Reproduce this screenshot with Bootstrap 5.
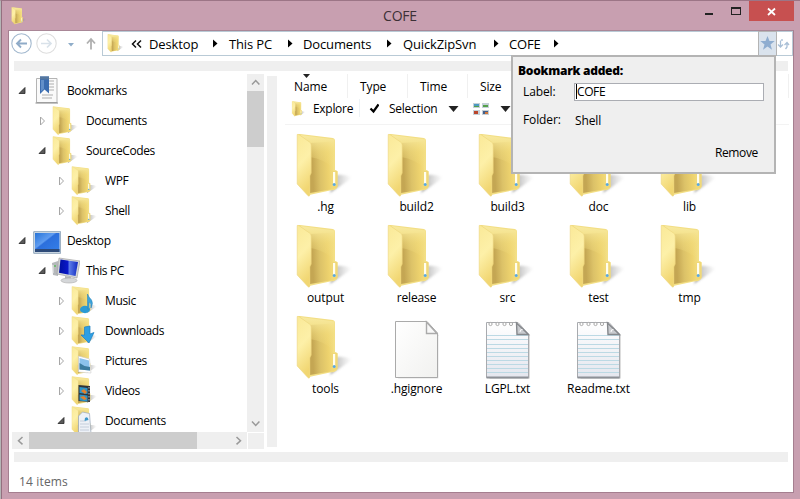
<!DOCTYPE html>
<html lang="en">
<head>
<meta charset="utf-8">
<title>COFE</title>
<link href="https://cdn.jsdelivr.net/npm/bootstrap@5.3.0/dist/css/bootstrap.min.css" rel="stylesheet">
<style>
body{width:800px;height:499px;overflow:hidden;background:#c89fb0;font:12px/16px "Open Sans","Noto Sans",sans-serif;color:#000;letter-spacing:-.12px}
svg{display:block;flex:none}
.window{width:800px;height:499px;border-top:1px solid #9c7586;border-left:1px solid #b5b5b5;box-shadow:inset 1px 0 #94707f}
.titlebar{height:29px;padding-right:6px}
.app-icon{margin-top:5px}
.caption-text{width:600px;margin-left:73px;font-size:14px;line-height:30px;color:#3c3036;letter-spacing:-.2px}
.close-box{width:45px;height:20px;background:#c75050}
.client{width:786px;height:463px;margin-left:7px;border:1px solid #a57f90;border-top-color:#a98797;background:#fff}
.addressbar{height:25px}
.crumbs{width:691px;height:25px;border:1px solid #b9cad6;font-size:13px;letter-spacing:-.13px}
.crumb{white-space:nowrap}
.back-more{margin:0 7px 0 6px}
.star-btn{width:17px;height:23px;background:#dae3ed;outline:1px solid #b4b4b4}
.strip{height:10px;background:#efefef;margin:5px 5px 0}
.strip-low{margin-top:3px}
.main-area{height:375px;margin-top:3px}
.sidebar{width:252px;margin-left:3px}
.tree{width:235px;height:358px;overflow:hidden;padding-top:2px;letter-spacing:-.38px}
.tree-row{height:30px}
.lv1{padding-left:19px}.lv2{padding-left:38px}
.tw{width:9px;margin-left:6px}
.lv1 .tw,.lv2 .tw{margin-left:7px}
.ic{width:28px;margin:0 6px 0 6px}
.lv1 .ic,.lv2 .ic{margin-left:5px}
.vbar{width:17px;height:358px;background:#efefef}
.vthumb{height:56px;background:#cdcdcd}
.hbar{width:235px;height:17px;background:#efefef}
.hthumb{width:168px;height:17px;background:#cdcdcd}
.corner{width:16px;height:16px;background:#efefef}
.splitter{width:10px;height:371px;margin:2px 0 0 3px;background:#efefef}
.pane{width:511px;margin-left:4px}
.heads{height:24px}
.heads>div{height:24px;border-right:1px solid #f0f0f0;padding:5px 0 0 12px}
.heads>div:first-child{padding-left:13px}
.tools{height:27px;border-bottom:1px solid #f3f3f3;margin:0 3px 0 4px}
.tools>*{position:relative;top:-2px}
.files{display:grid;grid-template-columns:repeat(5,91px);grid-auto-rows:91px;padding-top:7px;margin-left:-1px}
.file{padding-top:1px}
.file .pic{width:60px;height:66px;margin-left:16px}
.fname{text-align:center;line-height:16px}
.statusbar{padding-left:10px;line-height:17px;color:#666;margin-top:11px;letter-spacing:.15px}
.popup{left:511px;top:55px;width:265px;height:119px;background:#efefef;border:2px solid #b4b4b4;z-index:5}
.popup-title{font-weight:800;padding:6px 0 0 5px;letter-spacing:-.27px}
.popup-grid{display:grid;grid-template-columns:51px 190px;padding:4px 0 0 10px;row-gap:9px}
.popup-label{padding-top:1px}
.folder-label{padding-top:2px}
.folder-value{padding:4px 0 0 1px;line-height:14px}
.remove-link{padding:17px 16px 0 0;letter-spacing:-.35px}
.field{height:18px;line-height:16px;border:1px solid #abadb3;background:#fff;padding-left:1px}
.field span{border-left:1px solid #000;display:inline-block;line-height:15px;letter-spacing:-.4px}
.sort-mark{left:302px;top:73px}
</style>
<script src="https://cdn.jsdelivr.net/npm/bootstrap@5.3.0/dist/js/bootstrap.bundle.min.js"></script>
</head>
<body>
<svg width="0" height="0" class="position-absolute">
<defs>
<linearGradient id="gf" x1="0" y1="0" x2=".25" y2="1"><stop offset="0" stop-color="#fae998"/><stop offset=".5" stop-color="#fdf0a8"/><stop offset="1" stop-color="#f1d672"/></linearGradient>
<linearGradient id="gb" x1="0" y1=".1" x2="1" y2="0"><stop offset=".1" stop-color="#c4a653"/><stop offset=".4" stop-color="#dcc268"/><stop offset=".75" stop-color="#eed36e"/><stop offset="1" stop-color="#f3df85"/></linearGradient>
<linearGradient id="gt" x1="0" y1="0" x2="0" y2="1"><stop offset="0" stop-color="#f8eaa2"/><stop offset=".5" stop-color="#f2dd80" stop-opacity=".5"/><stop offset="1" stop-color="#f2dd80" stop-opacity="0"/></linearGradient>
<linearGradient id="gs" x1="0" x2="1"><stop offset="0" stop-color="#777" stop-opacity=".7"/><stop offset="1" stop-color="#aaa" stop-opacity="0"/></linearGradient>
<linearGradient id="gscr" x1="0" y1="0" x2="1" y2="1"><stop offset="0" stop-color="#2674d8"/><stop offset=".4" stop-color="#5f9cf0"/><stop offset=".45" stop-color="#2c6fdc"/><stop offset="1" stop-color="#3480ea"/></linearGradient>
<linearGradient id="gpc" x1="0" x2="1"><stop offset="0" stop-color="#0010a0"/><stop offset=".45" stop-color="#0a18c8"/><stop offset=".55" stop-color="#5b7be8"/><stop offset="1" stop-color="#1028c0"/></linearGradient>
<linearGradient id="gpaper" x1="0" y1="0" x2="1" y2="1"><stop offset="0" stop-color="#fff"/><stop offset="1" stop-color="#f1f1ef"/></linearGradient>
<linearGradient id="gnote" x1="0" y1="0" x2="0" y2="1"><stop offset="0" stop-color="#fff"/><stop offset="1" stop-color="#e4e6ee"/></linearGradient>
<filter id="soft" x="-20%" y="-20%" width="140%" height="140%"><feGaussianBlur stdDeviation="1.2"/></filter>
<symbol id="folder" viewBox="0 0 60 66">
<path d="M34 60 L56 45 Q50 41 40 42Z" fill="url(#gs)" filter="url(#soft)"/>
<path d="M1.500 1.500 Q2 .8 4 1 L37 5 Q39 5.500 39 7.500 V37 Q41.500 37 41.500 39.500 V54 Q41 56 38 57 L34 57.500 L13 62 V10Z" fill="#f3df85"/>
<path d="M13 10 L37.500 8.500 V56 L14 60Z" fill="url(#gb)"/>
<path d="M4 2 L38.500 6.500 V36 Q28 26 14 24 V10Z" fill="url(#gt)"/>
<path d="M35.500 38 h6 v16 l-5 2.500z" fill="#f0d878"/>
<path d="M37 39 h2.200 v14 h-2.200z" fill="#fffef0"/><circle cx="38.200" cy="51.500" r="1.500" fill="#5aa9dd"/>
<path d="M1.200 1.500 Q2 1 3.500 2 L13.500 9 Q15.200 10 15.200 12 V40 L13.800 43 V62 Q13.500 64 11.800 62.500 L1.200 51Z" fill="url(#gf)" stroke="#ecd57c" stroke-width=".6"/>
</symbol>
<symbol id="sheet" viewBox="0 0 60 66"><path d="M8 60 V6 H37 L48 17 V60Z" fill="#888" opacity=".5" transform="translate(1.200 1.200)"/><path d="M6.500 4.500 H38 L48.500 16 V60.500 H6.500Z" fill="url(#gpaper)" stroke="#aaa"/><path d="M37.500 5 L48 16.500 H37.500Z" fill="#f8f8f8" stroke="#aaa" stroke-width="1.400"/></symbol>
<symbol id="note" viewBox="0 0 60 66"><path d="M8 60 V6 H37 L48 17 V60Z" fill="#777" opacity=".5" transform="translate(1.500 1.500)"/><path d="M6.500 5.500 H38 L48.500 17 V60.500 H6.500Z" fill="url(#gnote)" stroke="#a8aaae"/>
<path d="M7 18.500H48 M7 22.500H48 M7 27.500H48 M7 31.500H48 M7 35.500H48 M7 39.500H48 M7 43.500H48 M7 47.500H48 M7 51.500H48 M7 55.500H48" stroke="#bcd9e4"/><path d="M6.500 60.500H48.500" stroke="#8d9197" stroke-width="2"/>
<g fill="#fff" stroke="#aaa"><circle cx="10.500" cy="7" r="1.600"/><circle cx="17.500" cy="7" r="1.600"/><circle cx="24.500" cy="7" r="1.600"/><circle cx="31" cy="7" r="1.600"/></g>
<path d="M36.500 6 L48.500 17.500 H37Z" fill="#c9cbcf" stroke="#85888c" stroke-width="1.400"/><path d="M40 15 q0-3 2.500-2.500" fill="none" stroke="#fff"/></symbol>
<symbol id="shut" viewBox="0 0 9 12"><path d="M2.500 2 L6.500 6 L2.500 10Z" fill="#fff" stroke="#a6a6a6"/></symbol>
<symbol id="open" viewBox="0 0 9 12"><path d="M7 2.500 V8.500 H1Z" fill="#595959" stroke="#262626" stroke-width=".8"/></symbol>
</defs></svg>

<div class="window">
<header class="titlebar d-flex">
<svg width="18" height="20" class="app-icon ms-2" viewBox="-1 -1 18 20"><use href="#folder" x="1" width="17" height="18"/></svg>
<div class="caption-text text-center flex-shrink-0">COFE</div>
<svg width="46" height="29" viewBox="700 1 46 29"><path d="M705 14h8" stroke="#222" stroke-width="2"/><rect x="731.5" y="7.500" width="9" height="7" fill="none" stroke="#222"/><path d="M731 8h10" stroke="#222" stroke-width="2"/></svg>
<div class="close-box ms-auto d-flex align-items-center justify-content-center"><svg width="9" height="9" viewBox="0 0 9 9"><path d="M1 1.500 L8 8 M8 1.500 L1 8" stroke="#fff" stroke-width="1.800"/></svg></div>
</header>

<main class="client">
<div class="addressbar d-flex">
<svg width="93" height="25" viewBox="9 31 93 25" fill="none">
<circle cx="21.500" cy="43.500" r="9.700" stroke="#a3b9cf" stroke-width="1.100"/><path d="M27 43.500H17.500 M21 39.500l-4 4 4 4" stroke="#8fabc8" stroke-width="1.900"/>
<circle cx="46.500" cy="43.500" r="9.700" stroke="#dedede" stroke-width="1.100"/><path d="M41 43.500H50.500 M47 39.500l4 4-4 4" stroke="#d9e2ea" stroke-width="1.700"/>
<path d="M68 43h6l-3 3.500z" fill="#8fadc9"/><path d="M91 49.500V39.500 M87 43.500l4-4.500 4 4.500" stroke="#b0b0b0" stroke-width="1.800"/></svg>
<div class="crumbs d-flex align-items-center">
<svg width="18" height="20" viewBox="0 0 18 20" class="ms-1"><use href="#folder" width="18" height="19"/></svg>
<svg width="11" height="10" viewBox="0 0 11 10" class="back-more"><path d="M5 1.500 L1.500 5 L5 8.500 M10 1.500 L6.500 5 L10 8.500" fill="none" stroke="#111" stroke-width="1.500"/></svg>
<span class="crumb" style="width:64px">Desktop</span><svg width="5" height="9"><path d="M0 .5l4.500 4-4.500 4z"/></svg>
<span class="crumb" style="width:59px;margin-left:11px">This PC</span><svg width="5" height="9"><path d="M0 .5l4.500 4-4.500 4z"/></svg>
<span class="crumb" style="width:84px;margin-left:10px">Documents</span><svg width="5" height="9"><path d="M0 .5l4.500 4-4.500 4z"/></svg>
<span class="crumb" style="width:91px;margin-left:11px">QuickZipSvn</span><svg width="5" height="9"><path d="M0 .5l4.500 4-4.500 4z"/></svg>
<span class="crumb" style="width:45px;margin-left:10px">COFE</span><svg width="5" height="9"><path d="M0 .5l4.500 4-4.500 4z"/></svg>
<div class="star-btn ms-auto d-flex align-items-center justify-content-center"><svg width="15" height="15" viewBox="0 0 15 15"><path d="M7.500 0l2 5h5.200l-4.200 3.500 1.500 5.300-4.500-3.200-4.500 3.200 1.500-5.300L.3 5h5.200z" fill="#8fadd0"/></svg></div>
<svg width="16" height="14" viewBox="0 0 16 14" fill="none" stroke="#a9bfd6" stroke-width="1.300"><path d="M6 2v2M4.500 3.500v6M2 7.500l2.500 2.500L7 7.500M8.500 8L11 5.500 13 8M11 6v4l-1.500 2"/></svg>
</div></div>
<div class="strip"></div>

<div class="main-area d-flex">
<aside class="sidebar">
<div class="d-flex">
<div class="tree">
<div class="tree-row d-flex align-items-center"><svg class="tw" height="12"><use href="#open"/></svg><svg class="ic" height="30" viewBox="0 0 28 30"><path d="M3.500 2.500h20.500v24h-20.500z" fill="#fafafa" stroke="#b4b4b4"/><path d="M2.500 27h22.500" stroke="#888"/><path d="M16 5h5M16 8h5M16 11h5M16 14h5M9 19h11M9 22h10" stroke="#d4d4d4" stroke-width="2"/><path d="M7 .5h9v17l-4.500-4L7 18z" fill="#3a6cb0"/><path d="M7 .5h9v3H7z" fill="#55779f"/><path d="M8 4h3v9l-3 2.500z" fill="#628fc9"/></svg>Bookmarks</div>
<div class="tree-row lv1 d-flex align-items-center"><svg class="tw" height="12"><use href="#shut"/></svg><svg class="ic" height="30" viewBox="0 0 28 30"><use href="#folder" width="28" height="30"/></svg>Documents</div>
<div class="tree-row lv1 d-flex align-items-center"><svg class="tw" height="12"><use href="#open"/></svg><svg class="ic" height="30" viewBox="0 0 28 30"><use href="#folder" width="28" height="30"/></svg>SourceCodes</div>
<div class="tree-row lv2 d-flex align-items-center"><svg class="tw" height="12"><use href="#shut"/></svg><svg class="ic" height="30" viewBox="0 0 28 30"><use href="#folder" width="28" height="30"/></svg>WPF</div>
<div class="tree-row lv2 d-flex align-items-center"><svg class="tw" height="12"><use href="#shut"/></svg><svg class="ic" height="30" viewBox="0 0 28 30"><use href="#folder" width="28" height="30"/></svg>Shell</div>
<div class="tree-row d-flex align-items-center"><svg class="tw" height="12"><use href="#open"/></svg><svg class="ic" height="30" viewBox="0 0 28 30"><path d="M.7 5.700h27v21.600H.7z" fill="#d5e0ea" stroke="#8fa5ba"/><path d="M2 7h24.500v19H2z" fill="url(#gscr)"/><path d="M2 23h24.500v3H2z" fill="#2d4a78"/></svg>Desktop</div>
<div class="tree-row lv1 d-flex align-items-center"><svg class="tw" height="12"><use href="#open"/></svg><svg class="ic" height="30" viewBox="0 0 28 30"><path d="M0 7l6-2v15l-5-1z" fill="#b5b8bb"/><path d="M1 9v8" stroke="#eee"/><path d="M2 10h2" stroke="#3b3"/><path d="M7 2l21 3-3 17L5 18z" fill="#d4d7da" stroke="#999" stroke-width=".6"/><path d="M8.500 3.500l17.500 2.500-2.500 14L7 16.700z" fill="url(#gpc)"/><path d="M13 20l6 1v3h-6z" fill="#b6b8ba"/><ellipse cx="17" cy="24.500" rx="8" ry="2.500" fill="#d5d7d9" stroke="#aaa" stroke-width=".6"/></svg>This PC</div>
<div class="tree-row lv2 d-flex align-items-center"><svg class="tw" height="12"><use href="#shut"/></svg><svg class="ic" height="30" viewBox="0 0 28 30"><use href="#folder" width="28" height="30"/><ellipse cx="14" cy="23.500" rx="5" ry="3.700" fill="#2b9bd4"/><path d="M16.500 23V8q1 3 4 6 2 3-.5 8 .5-5-2-6v7z" fill="#3aa3dc" stroke="#3188bb" stroke-width=".6"/></svg>Music</div>
<div class="tree-row lv2 d-flex align-items-center"><svg class="tw" height="12"><use href="#shut"/></svg><svg class="ic" height="30" viewBox="0 0 28 30"><use href="#folder" width="28" height="30"/><path d="M13.500 11l5.500-1v8l4-1.500-5 10.500-8-8 3.500 0z" fill="#2e9fe4" stroke="#1b7fc0" stroke-width=".7"/></svg>Downloads</div>
<div class="tree-row lv2 d-flex align-items-center"><svg class="tw" height="12"><use href="#shut"/></svg><svg class="ic" height="30" viewBox="0 0 28 30"><use href="#folder" width="28" height="30"/><path d="M7.500 10l11 3 1.500 14-12.500-1z" fill="#fff" stroke="#ccc" stroke-width=".6"/><path d="M8.500 12l9.500 2.500 1 10-10.500-1z" fill="#8cc2ec"/><path d="M8.500 17l5 3 5.500 1v3.500l-10.500-1z" fill="#3d7c9f"/></svg>Pictures</div>
<div class="tree-row lv2 d-flex align-items-center"><svg class="tw" height="12"><use href="#shut"/></svg><svg class="ic" height="30" viewBox="0 0 28 30"><use href="#folder" width="28" height="30"/><path d="M7.500 9l11.500 1v16l-11.500-1z" fill="#303438"/><path d="M8.500 11l8 1v6l-8-1zM8.500 18.500l8 1v6l-8-1z" fill="#2d94c7"/><path d="M10 15l3-2 3 3-2 2zM9 21l4-1 3 3-3 1z" fill="#e3812c"/><path d="M18 11v15" stroke="#bbb" stroke-dasharray="1.500 1.500"/></svg>Videos</div>
<div class="tree-row lv2 d-flex align-items-center"><svg class="tw" height="12"><use href="#open"/></svg><svg class="ic" height="30" viewBox="0 0 28 30"><use href="#folder" width="28" height="30"/><path d="M7.500 10l4-4 7 1.500 1.500 20-12.500-1z" fill="#edf1f7" stroke="#9aa8ba" stroke-width=".7"/><path d="M9 15h6M9 18h9M9 21h9M9 24h9" stroke="#c5cedb"/><path d="M14 12q3-2 3.500 2l-4 1z" fill="#3b97c9"/></svg>Documents</div>
</div>
<div class="vbar d-flex flex-column">
<svg width="17" height="17"><path d="M5 10.500l3.700-4 3.700 4" fill="none" stroke="#999" stroke-width="1.500"/></svg><div class="vthumb"></div>
<svg width="17" height="17" class="mt-auto"><path d="M5 6.500l3.700 4 3.700-4" fill="none" stroke="#999" stroke-width="1.500"/></svg></div>
</div>
<div class="d-flex justify-content-between align-items-end">
<div class="hbar d-flex"><svg width="17" height="17"><path d="M10.500 5l-4 3.700 4 3.700" fill="none" stroke="#999" stroke-width="1.500"/></svg><div class="hthumb"></div><svg width="17" height="17" class="ms-auto"><path d="M6.500 5l4 3.700-4 3.700" fill="none" stroke="#999" stroke-width="1.500"/></svg></div>
<div class="corner"></div></div>
</aside>
<div class="splitter"></div>
<section class="pane">
<div class="heads d-flex">
<div style="width:67px">Name</div><div style="width:60px">Type</div><div style="width:60px">Time</div><div style="width:321px">Size</div>
</div>
<div class="tools d-flex align-items-center">
<svg width="20" height="20" viewBox="0 0 20 20" class="ms-1"><use href="#folder" x="2" y="2" width="16" height="16"/></svg>
<span style="width:46px;margin-left:4px;letter-spacing:-.3px">Explore</span>
<svg width="20" height="22" viewBox="359 98 20 22"><path d="M359.500 99v18" stroke="#edf2f6"/><path d="M370.500 108.500l3 3 5-7" fill="none" stroke="#000" stroke-width="2.200"/></svg>
<span style="width:59px;margin-left:10px;letter-spacing:-.25px">Selection</span>
<svg width="11" height="6"><path d="M.5 0h10l-5 6z" fill="#222"/></svg>
<svg width="17" height="15" viewBox="0 0 17 15" style="margin-left:14px"><path d="M0 1h7v5H0zM9 1h7v5H9zM0 8h7v5H0zM9 8h7v5H9z" fill="#c5d0d8"/><path d="M1 2h5v2H1z" fill="#4c9ac2"/><path d="M1 4h5v1H1zM10 3h5v2h-5z" fill="#54a04a"/><path d="M1 9h4v3H1z" fill="#b9462c"/><path d="M10 9h5v3h-5z" fill="#44618b"/><path d="M12 10h3v2h-3z" fill="#d0763c"/></svg>
<svg width="11" height="6" style="margin-left:10px"><path d="M.5 0h10l-5 6z" fill="#222"/></svg>
</div>
<div class="files">
<div class="file"><svg class="pic"><use href="#folder"/></svg><div class="fname">.hg</div></div>
<div class="file"><svg class="pic"><use href="#folder"/></svg><div class="fname">build2</div></div>
<div class="file"><svg class="pic"><use href="#folder"/></svg><div class="fname">build3</div></div>
<div class="file"><svg class="pic"><use href="#folder"/></svg><div class="fname">doc</div></div>
<div class="file"><svg class="pic"><use href="#folder"/></svg><div class="fname">lib</div></div>
<div class="file"><svg class="pic"><use href="#folder"/></svg><div class="fname">output</div></div>
<div class="file"><svg class="pic"><use href="#folder"/></svg><div class="fname">release</div></div>
<div class="file"><svg class="pic"><use href="#folder"/></svg><div class="fname">src</div></div>
<div class="file"><svg class="pic"><use href="#folder"/></svg><div class="fname">test</div></div>
<div class="file"><svg class="pic"><use href="#folder"/></svg><div class="fname">tmp</div></div>
<div class="file"><svg class="pic"><use href="#folder"/></svg><div class="fname">tools</div></div>
<div class="file"><svg class="pic" viewBox="-2 -2 60 66"><use href="#sheet" width="60" height="66"/></svg><div class="fname">.hgignore</div></div>
<div class="file"><svg class="pic" viewBox="-2 -2 60 66"><use href="#note" width="60" height="66"/></svg><div class="fname">LGPL.txt</div></div>
<div class="file"><svg class="pic" viewBox="-2 -2 60 66"><use href="#note" width="60" height="66"/></svg><div class="fname">Readme.txt</div></div>
</div>
</section>
</div>
<div class="strip strip-low"></div>
<footer class="statusbar">14 items</footer>
</main>
</div>

<div class="popup position-absolute">
<div class="popup-title">Bookmark added:</div>
<div class="popup-grid">
<div class="popup-label">Label:</div><div class="field"><span>COFE</span></div>
<div class="folder-label">Folder:</div><div class="folder-value">Shell</div>
</div>
<div class="remove-link text-end">Remove</div>
</div>
<svg class="sort-mark position-absolute" width="9" height="5"><path d="M1 1h7L4.500 5z" fill="#222"/></svg>
</body>
</html>
